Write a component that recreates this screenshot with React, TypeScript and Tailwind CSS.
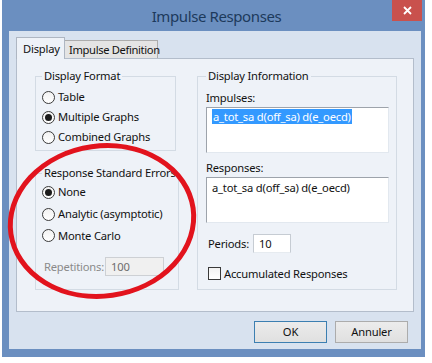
import React from 'react';

const Radio = ({ checked }: { checked?: boolean }) => (
  <span className="w-[13px] h-[13px] rounded-full border border-[#3a3a3a] bg-gradient-to-b from-[#f2f2f2] to-white flex items-center justify-center shrink-0">
    {checked && <span className="w-[7px] h-[7px] rounded-full bg-[#1b1b1b]" />}
  </span>
);

const RadioRow = ({ label, checked, h }: { label: string; checked?: boolean; h: string }) => (
  <div className={`flex items-center gap-[3px] ${h}`}>
    <Radio checked={checked} />
    <span>{label}</span>
  </div>
);

export default function App() {
  return (
    <div className="w-[432px] h-[363px] bg-white relative overflow-hidden text-[11.2px] tracking-[-0.2px] leading-[14px] text-[#111]" style={{ fontFamily: '"Noto Sans", "Open Sans", sans-serif' }}>
      {/* window */}
      <div className="ml-[2px] w-[423px] h-[357px] bg-[#6b8fc0] flex flex-col pl-[7px] pr-[4px] pb-[8px]">
        {/* title bar */}
        <div className="h-[31px] relative flex items-center justify-center">
          <span className="text-[15px] tracking-[-0.4px] leading-[20px] text-[#1d3a5c] pl-[3px]">Impulse Responses</span>
          <div className="absolute top-0 right-[-1px] w-[30px] h-[21px] bg-[#c9514d] flex items-center justify-center">
            <svg width="9" height="9" viewBox="0 0 9 9">
              <path d="M1 1 L8 8 M8 1 L1 8" stroke="white" strokeWidth="1.8" />
            </svg>
          </div>
        </div>

        {/* client */}
        <div className="flex-1 bg-[#d8e2ef] flex flex-col px-[7px] pt-[6px]">
          {/* tabs */}
          <div className="flex items-end h-[21px]">
            <div className="w-[49px] h-[22px] -mb-px relative z-10 bg-[#eef2f8] border border-b-0 border-[#aeb6c2] pl-[6px] flex items-center">
              Display
            </div>
            <div className="w-[93px] h-[18px] bg-[#e4e4e4] border border-l-0 border-b-0 border-[#acacac] pl-[4px] flex items-center whitespace-nowrap tracking-[-0.35px]">
              Impulse Definition
            </div>
          </div>

          {/* panel */}
          <div className="h-[254px] bg-[#eef2f8] border border-[#b3bdcb] flex gap-[21px] pl-[18px] pt-[10px]">
            {/* left column */}
            <div className="w-[141px] flex flex-col">
              <fieldset className="border border-[#d3dbe4] pl-[6px] pt-[4px] pb-[3px]">
                <legend className="px-[2px] leading-[14px]">Display Format</legend>
                <RadioRow label="Table" h="h-[20px]" />
                <RadioRow label="Multiple Graphs" checked h="h-[20px]" />
                <RadioRow label="Combined Graphs" h="h-[20px]" />
              </fieldset>

              <fieldset className="mt-[15px] border border-[#d3dbe4] pl-[6px] pt-[1px] pb-[13px]">
                <legend className="px-[2px] leading-[14px] whitespace-nowrap">Response Standard Errors</legend>
                <RadioRow label="None" checked h="h-[22px]" />
                <RadioRow label="Analytic (asymptotic)" h="h-[22px]" />
                <RadioRow label="Monte Carlo" h="h-[21px]" />
                <div className="mt-[11px] flex items-center h-[19px] pl-[2px]">
                  <span className="text-[#8a8a8a] w-[61px] whitespace-nowrap">Repetitions:</span>
                  <div className="w-[59px] h-[19px] bg-[#f0f0f0] border border-[#cdd0d4] text-[#6d6d6d] pl-[5px] flex items-center">100</div>
                </div>
              </fieldset>
            </div>

            {/* right column */}
            <fieldset className="w-[200px] h-[221px] border border-[#d3dbe4] pl-[8px]">
              <legend className="px-[2px] leading-[14px]">Display Information</legend>
              <div className="mt-[8px] h-[14px]">Impulses:</div>
              <div className="mt-[2px] w-[183px] h-[46px] bg-white border border-[#9da3ab] border-r-[#e2e8ef] border-b-[#e2e8ef] pl-[5px] pt-[2px]">
                <span className="bg-[#3399ff] text-white px-[1px] leading-[14px]">a_tot_sa d(off_sa) d(e_oecd)</span>
              </div>
              <div className="mt-[8px] h-[14px]">Responses:</div>
              <div className="mt-[2px] w-[183px] h-[46px] bg-white border border-[#9da3ab] border-r-[#e2e8ef] border-b-[#e2e8ef] pl-[5px] pt-[3px]">
                a_tot_sa d(off_sa) d(e_oecd)
              </div>
              <div className="mt-[11px] flex items-center h-[19px] pl-[2px]">
                <span className="w-[45px]">Periods:</span>
                <div className="w-[38px] h-[19px] bg-white border border-[#c6ccd3] border-b-[#e6ebf0] pl-[5px] flex items-center">10</div>
              </div>
              <div className="mt-[14px] flex items-center gap-[3px] h-[13px] pl-[2px]">
                <span className="w-[13px] h-[13px] border border-[#3a3a3a] bg-gradient-to-b from-[#f2f2f2] to-white shrink-0" />
                <span>Accumulated Responses</span>
              </div>
            </fieldset>
          </div>

          {/* buttons */}
          <div className="mt-[9px] flex justify-end gap-[8px] pr-[6px]">
            <button className="w-[73px] h-[22px] border border-[#3c7fb1] bg-gradient-to-b from-[#ececec] to-[#e0e0e0] flex items-center justify-center">OK</button>
            <button className="w-[73px] h-[22px] border border-[#acacac] bg-gradient-to-b from-[#ececec] to-[#e0e0e0] flex items-center justify-center">Annuler</button>
          </div>
        </div>
      </div>

      {/* red hand-drawn ellipse over the dialog */}
      <svg className="absolute inset-0 pointer-events-none" width="432" height="363">
        <ellipse cx="102" cy="221" rx="92" ry="75" transform="rotate(-8 102 221)" fill="none" stroke="#e2131d" strokeWidth="5" />
      </svg>
    </div>
  );
}
